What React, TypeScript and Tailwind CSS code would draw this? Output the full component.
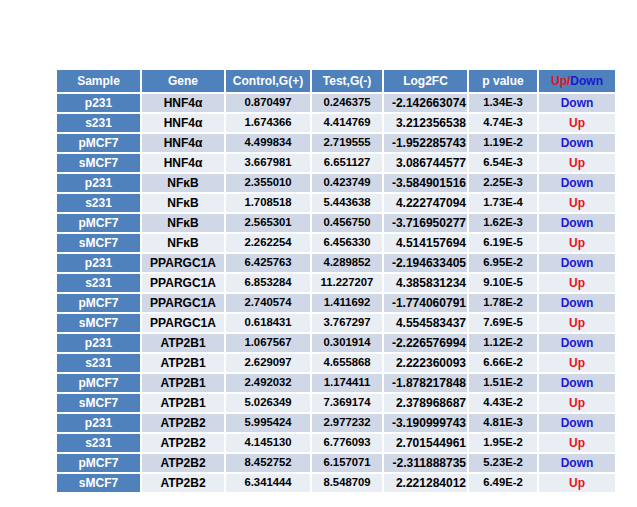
const rows: [string, string, string, string, string, string, boolean][] = [
  ["p231", "HNF4α", "0.870497", "0.246375", "-2.142663074", "1.34E-3", false],
  ["s231", "HNF4α", "1.674366", "4.414769", "3.212356538", "4.74E-3", true],
  ["pMCF7", "HNF4α", "4.499834", "2.719555", "-1.952285743", "1.19E-2", false],
  ["sMCF7", "HNF4α", "3.667981", "6.651127", "3.086744577", "6.54E-3", true],
  ["p231", "NFκB", "2.355010", "0.423749", "-3.584901516", "2.25E-3", false],
  ["s231", "NFκB", "1.708518", "5.443638", "4.222747094", "1.73E-4", true],
  ["pMCF7", "NFκB", "2.565301", "0.456750", "-3.716950277", "1.62E-3", false],
  ["sMCF7", "NFκB", "2.262254", "6.456330", "4.514157694", "6.19E-5", true],
  ["p231", "PPARGC1A", "6.425763", "4.289852", "-2.194633405", "6.95E-2", false],
  ["s231", "PPARGC1A", "6.853284", "11.227207", "4.385831234", "9.10E-5", true],
  ["pMCF7", "PPARGC1A", "2.740574", "1.411692", "-1.774060791", "1.78E-2", false],
  ["sMCF7", "PPARGC1A", "0.618431", "3.767297", "4.554583437", "7.69E-5", true],
  ["p231", "ATP2B1", "1.067567", "0.301914", "-2.226576994", "1.12E-2", false],
  ["s231", "ATP2B1", "2.629097", "4.655868", "2.222360093", "6.66E-2", true],
  ["pMCF7", "ATP2B1", "2.492032", "1.174411", "-1.878217848", "1.51E-2", false],
  ["sMCF7", "ATP2B1", "5.026349", "7.369174", "2.378968687", "4.43E-2", true],
  ["p231", "ATP2B2", "5.995424", "2.977232", "-3.190999743", "4.81E-3", false],
  ["s231", "ATP2B2", "4.145130", "6.776093", "2.701544961", "1.95E-2", true],
  ["pMCF7", "ATP2B2", "8.452752", "6.157071", "-2.311888735", "5.23E-2", false],
  ["sMCF7", "ATP2B2", "6.341444", "8.548709", "2.221284012", "6.49E-2", true],
];

const head = "bg-[#4f81bd] text-white h-[22px] p-0 text-[12px] font-bold";

export default function App() {
  return (
    <div
      className="w-[637px] h-[507px] bg-white pl-[55px] pt-[68px]"
      style={{ fontFamily: '"Liberation Sans", Arial, sans-serif' }}
    >
      <table className="border-separate border-spacing-[2px] text-center font-bold">
        <colgroup>
          <col className="w-[83px]" />
          <col className="w-[82px]" />
          <col className="w-[84px]" />
          <col className="w-[70px]" />
          <col className="w-[83px]" />
          <col className="w-[68px]" />
          <col className="w-[76px]" />
        </colgroup>
        <thead>
          <tr>
            <th className={head}>Sample</th>
            <th className={head}>Gene</th>
            <th className={head}>Control,G(+)</th>
            <th className={head}>Test,G(-)</th>
            <th className={head}>Log2FC</th>
            <th className={head}>p value</th>
            <th className={head}>
              <span className="text-[#e4141b]">Up/</span>
              <span className="text-[#1a1ad0]">Down</span>
            </th>
          </tr>
        </thead>
        <tbody>
          {rows.map((r, i) => {
            const bg = i % 2 === 0 ? "bg-[#d0d8e8]" : "bg-[#e9edf4]";
            const num = `${bg} h-[18px] p-0 text-[11.3px] text-black leading-none`;
            const big = `${bg} h-[18px] p-0 text-[12px] text-black leading-none`;
            return (
              <tr key={i}>
                <td className="bg-[#4f81bd] h-[18px] p-0 text-[12px] text-white leading-none">{r[0]}</td>
                <td className={big}>{r[1]}</td>
                <td className={num}>{r[2]}</td>
                <td className={num}>{r[3]}</td>
                <td className={`${big} text-right pr-[1px]`}>{r[4]}</td>
                <td className={num}>{r[5]}</td>
                <td className={big}>
                  {r[6] ? (
                    <span className="text-[#e4141b]">Up</span>
                  ) : (
                    <span className="text-[#1a1ad0]">Down</span>
                  )}
                </td>
              </tr>
            );
          })}
        </tbody>
      </table>
    </div>
  );
}
